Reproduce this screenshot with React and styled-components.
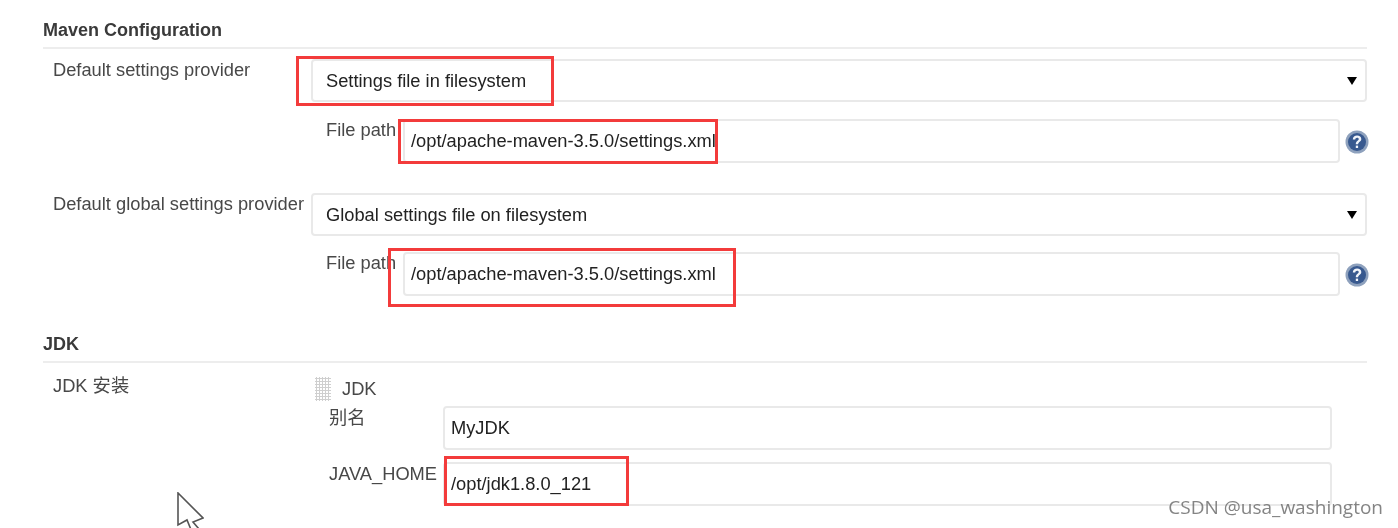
import styled, { createGlobalStyle } from "styled-components";

const GlobalStyle = createGlobalStyle`
    html, body {
        margin: 0;
        padding: 0;
        background: #fff;
        overflow: hidden;
    }
    body {
        font-family: "Liberation Sans", "Noto Sans CJK SC", sans-serif;
        color: #222;
    }
`;

function Select({ value }) {
    return (
        <SelectBox>
            <span>{value}</span>
            <Caret />
        </SelectBox>
    );
}

function HelpIcon() {
    return (
        <HelpSvg viewBox="0 0 24 24">
            <circle cx="12" cy="12" r="11.5" fill="#8ea1bd" />
            <circle cx="12" cy="12" r="9" fill="#38598f" />
            <path d="M7.8 9.4c0-2.5 1.9-3.9 4.3-3.9 2.5 0 4.2 1.4 4.2 3.4 0 2.9-3.2 2.9-3.2 5.4h-2.3c0-3.4 3-3.4 3-5.2 0-.8-.7-1.4-1.7-1.4-1.1 0-1.9.8-1.9 1.9z" fill="#f2f5fa" />
            <rect x="10.8" y="15.6" width="2.3" height="2.4" fill="#f2f5fa" />
        </HelpSvg>
    );
}

function App() {
    return (
        <Page>
            <GlobalStyle />
            <Section>
                <Heading>Maven Configuration</Heading>
                <Row>
                    <Label>Default settings provider</Label>
                    <Column $gap={17}>
                        <Field>
                            <Select value="Settings file in filesystem" />
                            <Highlight $left={-15} $top={-3} $width={258} $height={50} />
                        </Field>
                        <SubRow>
                            <SubLabel>File path</SubLabel>
                            <Field $grow>
                                <Input>/opt/apache-maven-3.5.0/settings.xml</Input>
                                <Highlight $left={-5} $top={0} $width={320} $height={45} />
                            </Field>
                            <HelpIcon />
                        </SubRow>
                    </Column>
                </Row>
                <Row $top={30}>
                    <Label>Default global settings provider</Label>
                    <Column $gap={16}>
                        <Select value="Global settings file on filesystem" />
                        <SubRow>
                            <SubLabel>File path</SubLabel>
                            <Field $grow>
                                <Input>/opt/apache-maven-3.5.0/settings.xml</Input>
                                <Highlight $left={-15} $top={-4} $width={348} $height={59} />
                            </Field>
                            <HelpIcon />
                        </SubRow>
                    </Column>
                </Row>
            </Section>
            <JdkSection>
                <Heading>JDK</Heading>
                <JdkRow>
                    <Label>JDK 安装</Label>
                    <JdkColumn>
                        <JdkTitle>
                            <Handle />
                            <span>JDK</span>
                        </JdkTitle>
                        <JdkField>
                            <JdkLabel>别名</JdkLabel>
                            <Input>MyJDK</Input>
                        </JdkField>
                        <JdkField>
                            <JdkLabel>JAVA_HOME</JdkLabel>
                            <Field $grow>
                                <Input>/opt/jdk1.8.0_121</Input>
                                <Highlight $left={1} $top={-6} $width={185} $height={50} />
                            </Field>
                        </JdkField>
                    </JdkColumn>
                </JdkRow>
            </JdkSection>
            <Cursor viewBox="0 0 27 36">
                <path d="M1 1V33L10 28L15 40L22 37L16 30L26 26Z" fill="#fff" stroke="#555" strokeWidth="1.6" />
            </Cursor>
            <Watermark>CSDN @usa_washington</Watermark>
        </Page>
    );
}

const Page = styled.div`
    position: relative;
    width: 1398px;
    height: 528px;
    padding: 19px 31px 0 43px;
    box-sizing: border-box;
    overflow: hidden;
    background: #fff;
    filter: blur(0.3px);
`;

const Section = styled.section`
    display: flex;
    flex-direction: column;
`;

const JdkSection = styled(Section)`
    margin-top: 37px;
`;

const Heading = styled.h2`
    margin: 0;
    height: 30px;
    line-height: 22px;
    font-size: 18px;
    font-weight: 700;
    color: #3a3a3a;
    border-bottom: 2px solid #ededed;
    box-sizing: border-box;
`;

const Row = styled.div`
    display: grid;
    grid-template-columns: 258px 1fr;
    padding: 0 0 0 10px;
    margin-top: ${(p) => p.$top || 10}px;
`;

const Label = styled.div`
    font-size: 18.3px;
    line-height: 22px;
    color: #484848;
    white-space: nowrap;
`;

const Column = styled.div`
    display: flex;
    flex-direction: column;
    gap: ${(p) => p.$gap}px;
`;

const Field = styled.div`
    position: relative;
    flex: ${(p) => (p.$grow ? 1 : "none")};
    min-width: 0;
`;

const SelectBox = styled.div`
    display: flex;
    align-items: center;
    justify-content: space-between;
    height: 43px;
    box-sizing: border-box;
    padding: 0 8px 0 13px;
    background: #fff;
    border: 2px solid #e9e9e9;
    border-radius: 4px;
    font-size: 18.3px;
    color: #222;
`;

const Caret = styled.i`
    width: 0;
    height: 0;
    border-left: 5px solid transparent;
    border-right: 5px solid transparent;
    border-top: 8px solid #000;
`;

const SubRow = styled.div`
    display: flex;
    align-items: flex-start;
    padding-left: 15px;
`;

const SubLabel = styled.div`
    width: 77px;
    flex: none;
    font-size: 18.3px;
    line-height: 22px;
    color: #484848;
    white-space: nowrap;
`;

const Input = styled.div`
    height: 44px;
    box-sizing: border-box;
    padding: 0 6px;
    display: flex;
    align-items: center;
    background: #fff;
    border: 2px solid #e9e9e9;
    border-radius: 4px;
    font-size: 18.3px;
    color: #222;
`;

const HelpSvg = styled.svg`
    width: 24px;
    height: 24px;
    flex: none;
    margin: 11px -2px 0 5px;
`;

const Highlight = styled.div`
    position: absolute;
    left: ${(p) => p.$left}px;
    top: ${(p) => p.$top}px;
    width: ${(p) => p.$width}px;
    height: ${(p) => p.$height}px;
    box-sizing: border-box;
    border: 3px solid #f33b3b;
    pointer-events: none;
`;

const JdkRow = styled.div`
    display: grid;
    grid-template-columns: 262px 1fr;
    padding: 12px 0 0 10px;
`;

const JdkColumn = styled.div`
    display: flex;
    flex-direction: column;
    gap: 12px;
`;

const JdkTitle = styled.div`
    display: flex;
    align-items: center;
    gap: 11px;
    height: 26px;
    margin-top: 1px;
    margin-bottom: -8px;
    font-size: 18.3px;
    color: #484848;
`;

const Handle = styled.i`
    width: 16px;
    height: 24px;
    background-image: radial-gradient(#cfcfcf 1px, transparent 1.2px);
    background-size: 3px 3px;
`;

const JdkField = styled.div`
    display: grid;
    grid-template-columns: 114px 889px;
    margin-left: 14px;
`;

const JdkLabel = styled.div`
    padding-top: 1px;
    font-size: 18.3px;
    line-height: 22px;
    color: #484848;
    white-space: nowrap;
`;

const Cursor = styled.svg`
    position: absolute;
    left: 177px;
    top: 492px;
    width: 27px;
    height: 36px;
`;

const Watermark = styled.div`
    position: absolute;
    right: 15px;
    top: 495px;
    font-family: "Open Sans", sans-serif;
    font-size: 19px;
    line-height: 24px;
    color: rgba(110, 110, 110, 0.85);
    white-space: nowrap;
`;

export default App;
